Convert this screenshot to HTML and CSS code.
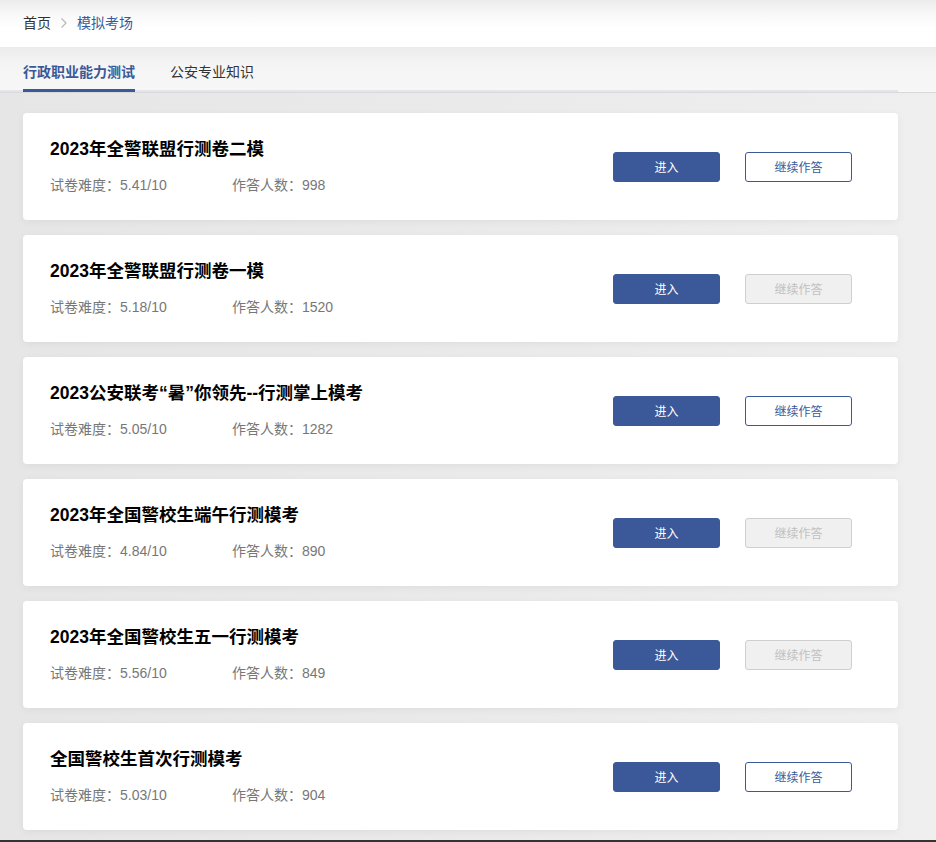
FILE: index.html
```html
<!DOCTYPE html>
<html lang="zh-CN">
<head>
<meta charset="utf-8">
<title>模拟考场</title>
<link rel="stylesheet" href="styles.css">
</head>
<body>
<div class="page">
  <div class="crumbs">
    <span class="crumb">首页</span>
    <svg class="chev" width="8" height="12" viewBox="0 0 8 12"><path d="M1.5 1.5 L6 6 L1.5 10.5" fill="none" stroke="#b8b8b8" stroke-width="1.2"/></svg>
    <span class="crumb current">模拟考场</span>
  </div>
  <div class="tabs">
    <div class="tab-list">
      <span class="tab active">行政职业能力测试</span>
      <span class="tab">公安专业知识</span>
    </div>
  </div>
  <div class="list">
    <div class="card">
      <div class="info">
        <div class="title">2023年全警联盟行测卷二模</div>
        <div class="meta"><span class="diff">试卷难度：5.41/10</span><span>作答人数：998</span></div>
      </div>
      <div class="actions"><button class="btn primary">进入</button><button class="btn outline">继续作答</button></div>
    </div>
    <div class="card">
      <div class="info">
        <div class="title">2023年全警联盟行测卷一模</div>
        <div class="meta"><span class="diff">试卷难度：5.18/10</span><span>作答人数：1520</span></div>
      </div>
      <div class="actions"><button class="btn primary">进入</button><button class="btn disabled">继续作答</button></div>
    </div>
    <div class="card">
      <div class="info">
        <div class="title">2023公安联考“暑”你领先--行测掌上模考</div>
        <div class="meta"><span class="diff">试卷难度：5.05/10</span><span>作答人数：1282</span></div>
      </div>
      <div class="actions"><button class="btn primary">进入</button><button class="btn outline">继续作答</button></div>
    </div>
    <div class="card">
      <div class="info">
        <div class="title">2023年全国警校生端午行测模考</div>
        <div class="meta"><span class="diff">试卷难度：4.84/10</span><span>作答人数：890</span></div>
      </div>
      <div class="actions"><button class="btn primary">进入</button><button class="btn disabled">继续作答</button></div>
    </div>
    <div class="card">
      <div class="info">
        <div class="title">2023年全国警校生五一行测模考</div>
        <div class="meta"><span class="diff">试卷难度：5.56/10</span><span>作答人数：849</span></div>
      </div>
      <div class="actions"><button class="btn primary">进入</button><button class="btn disabled">继续作答</button></div>
    </div>
    <div class="card">
      <div class="info">
        <div class="title">全国警校生首次行测模考</div>
        <div class="meta"><span class="diff">试卷难度：5.03/10</span><span>作答人数：904</span></div>
      </div>
      <div class="actions"><button class="btn primary">进入</button><button class="btn outline">继续作答</button></div>
    </div>
  </div>
  <div class="footer-line"></div>
</div>
</body>
</html>
```

FILE: styles.css
```css
html, body {
  margin: 0;
  padding: 0;
}
body {
  font-family: "Liberation Sans", "Noto Sans CJK SC", sans-serif;
  background: #ececec;
  overflow: hidden;
}
.page {
  width: 936px;
  min-height: 842px;
  background: linear-gradient(90deg, #e6e6e6 0%, #ebebeb 60%, #efefef 100%);
}
.crumbs {
  height: 47px;
  box-sizing: border-box;
  padding: 13px 0 0 23px;
  display: flex;
  align-items: flex-start;
  background: linear-gradient(180deg, #ececec 0%, #f8f8f8 30%, #ffffff 60%);
  font-size: 14px;
  line-height: 20px;
  color: #333;
}
.crumb { display: block; }
.chev { margin: 4px 9px 0 9px; }
.crumb.current { color: #3b5998; }
.tabs {
  height: 46px;
  box-sizing: border-box;
  background: linear-gradient(180deg, #ececec 0%, #f5f5f5 40%, #f7f7f7 100%);
  border-bottom: 1px solid #d9d9d9;
}
.tab-list {
  width: 898px;
  height: 45px;
  box-sizing: border-box;
  padding-left: 23px;
  display: flex;
  gap: 35px;
  border-bottom: 2px solid #e2e5ec;
}
.tab {
  font-size: 14px;
  line-height: 20px;
  padding-top: 15px;
  color: #333;
  height: 45px;
  box-sizing: border-box;
}
.tab.active {
  color: #3b5998;
  font-weight: bold;
  border-bottom: 3px solid #3b5998;
}
.list {
  padding: 20px 38px 0 23px;
  display: flex;
  flex-direction: column;
  gap: 15px;
}
.card {
  background: #fff;
  border-radius: 4px;
  height: 107px;
  box-sizing: border-box;
  padding: 0 46px 0 27px;
  display: flex;
  align-items: center;
  justify-content: space-between;
  box-shadow: 0 2px 8px rgba(0, 0, 0, 0.05);
}
.info {
  margin-bottom: 2px;
}
.title {
  font-size: 17.5px;
  font-weight: bold;
  line-height: 24px;
  color: #000;
}
.meta {
  margin-top: 14px;
  font-size: 14px;
  line-height: 20px;
  color: #777;
  display: flex;
}
.diff {
  width: 182px;
}
.actions {
  display: flex;
  gap: 25px;
}
.btn {
  width: 107px;
  height: 30px;
  box-sizing: border-box;
  border-radius: 3px;
  font-family: "Liberation Sans", "Noto Sans CJK SC", sans-serif;
  font-size: 12px;
  padding: 0;
  cursor: pointer;
}
.btn.primary {
  background: #3b5998;
  border: 1px solid #3b5998;
  color: #fff;
}
.btn.outline {
  background: #fff;
  border: 1px solid #3b5998;
  color: #3b5998;
}
.btn.disabled {
  background: #f0f0f0;
  border: 1px solid #cfcfcf;
  color: #c0c0c0;
}
.footer-line {
  margin-top: 10px;
  height: 2px;
  background: #333;
}
```
